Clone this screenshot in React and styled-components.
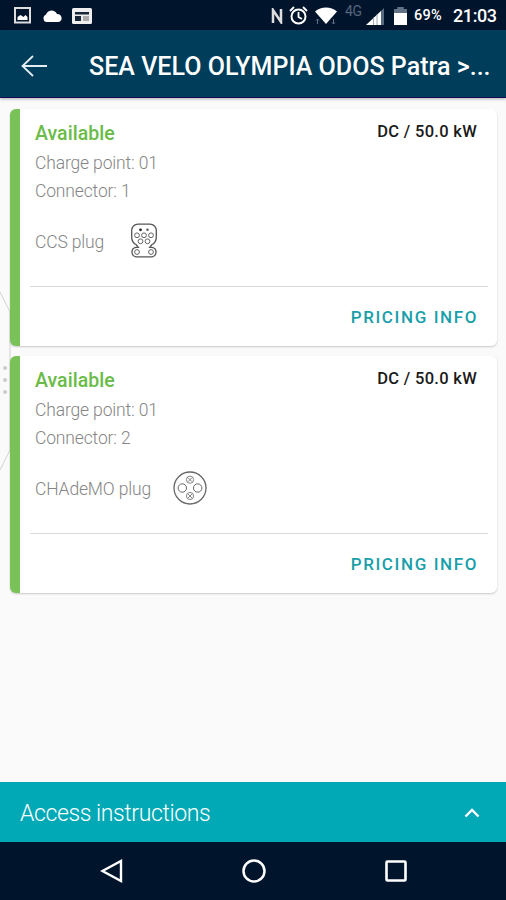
import React from "react";
import styled, { createGlobalStyle } from "styled-components";

const GlobalStyle = createGlobalStyle`
  * {
    box-sizing: border-box;
  }

  body {
    margin: 0;
    font-family: Roboto, "Liberation Sans", sans-serif;
  }
`;

const Screen = styled.div`
  display: flex;
  flex-direction: column;
  width: 506px;
  height: 900px;
  overflow: hidden;
  background: #fafafa;
`;

const StatusBar = styled.div`
  display: flex;
  align-items: center;
  height: 30px;
  flex: none;
  padding: 1px 9px 0 14px;
  background: #00142c;
  color: #fff;
`;

const Icon = styled.svg`
  display: block;
  flex: none;
  fill: none;
  stroke: ${(props) => props.$color || "#fff"};
  margin-left: ${(props) => props.$gap || 0}px;
`;

const Spacer = styled.div`
  flex: 1;
`;

const Network = styled.span`
  align-self: flex-start;
  margin-left: 8px;
  width: 18px;
  font-size: 14px;
  line-height: 20px;
  letter-spacing: -0.4px;
  color: #54657c;
`;

const Battery = styled.span`
  margin-left: 7px;
  width: 32px;
  font-size: 14.5px;
  font-weight: 500;
  letter-spacing: 0.3px;
`;

const Clock = styled.span`
  margin-left: 7px;
  width: 44px;
  font-size: 18px;
  font-weight: 500;
  letter-spacing: -0.4px;
  white-space: nowrap;
`;

const Header = styled.header`
  display: flex;
  align-items: center;
  height: 68px;
  flex: none;
  padding: 4px 14px 0 21px;
  background: #003d5a;
  border-bottom: 1px solid #140c50;
  box-shadow: 0 1px 3px rgba(20, 20, 60, 0.35);
  z-index: 1;
`;

const Title = styled.h1`
  margin: 0 0 0 41px;
  padding-top: 1px;
  font-size: 25px;
  font-weight: 500;
  letter-spacing: 0.02px;
  color: #fff;
  white-space: nowrap;
`;

const Content = styled.main`
  position: relative;
  display: flex;
  flex-direction: column;
  gap: 10px;
  flex: 1;
  padding: 11px 9px 0 10px;
`;

// Edge of the side drawer, lies under the cards
const DrawerHandle = styled.svg`
  position: absolute;
  left: 0;
  top: 190px;
  fill: none;
  stroke: #d2d2d2;
`;

const Card = styled.section`
  position: relative;
  height: 237px;
  padding: 12px 10px 0 20px;
  background: #fff;
  border-left: 10px solid #78c258;
  border-radius: 6px;
  box-shadow: 0 1px 2px rgba(0, 0, 0, 0.2);
`;

const CardTop = styled.div`
  display: flex;
  justify-content: space-between;
  height: 28px;
  margin-left: -5px;
  padding-right: 10px;
`;

const Availability = styled.h2`
  margin: 0;
  font-size: 19.5px;
  font-weight: 500;
  line-height: 26px;
  letter-spacing: 0.05px;
  color: #6abb48;
`;

const Power = styled.span`
  font-size: 16.5px;
  font-weight: 500;
  line-height: 21px;
  letter-spacing: 0.3px;
  color: #1a1a1a;
`;

const Detail = styled.p`
  margin: 0 0 0 -5px;
  font-size: 17.5px;
  font-weight: 300;
  line-height: 28px;
  letter-spacing: -0.15px;
  color: #858585;
`;

const Plug = styled.div`
  display: flex;
  align-items: center;
  gap: ${(props) => props.$gap}px;
  height: 34px;
  margin-top: 19px;

  ${Detail} {
    padding-top: 2px;
  }
`;

const CardFooter = styled.div`
  display: flex;
  justify-content: flex-end;
  margin: 28px -1px 0 -10px;
  padding: 18px 10px 0 0;
  border-top: 1px solid #dadada;
`;

const PricingButton = styled.button`
  padding: 0;
  border: 0;
  background: none;
  font-family: inherit;
  font-size: 17px;
  font-weight: 500;
  line-height: 24px;
  letter-spacing: 1.6px;
  color: #1a9faa;
`;

const Instructions = styled.div`
  display: flex;
  align-items: center;
  justify-content: space-between;
  height: 60px;
  flex: none;
  padding: 2px 26px 0 20px;
  background: #00a9b5;
  font-size: 23px;
  font-weight: 300;
  letter-spacing: -0.4px;
  color: #fff;
`;

const NavBar = styled.nav`
  display: flex;
  align-items: center;
  height: 58px;
  flex: none;
  padding: 0 0 0 100px;
  background: #00142c;
`;

const CcsIcon = () => (
  <Icon width="30" height="36" viewBox="0 0 30 36" $color="#555">
    <path
      d="M9 1.2h12c3.6 0 6.3 2.8 6.3 6.4v6.6c0 4-2 6.2-4.6 7.6l-2 2.6h2.5a4.8 4.8 0 0 1 0 9.4H6.8a4.8 4.8 0 0 1 0-9.4h2.5l-2-2.6c-2.6-1.4-4.6-3.6-4.6-7.6V7.6c0-3.6 2.7-6.4 6.3-6.4z"
      strokeWidth="1.3"
    />
    <g strokeWidth="0.9">
      <circle cx="8" cy="12.3" r="2.4" />
      <circle cx="15" cy="12.3" r="2.4" />
      <circle cx="22" cy="12.3" r="2.4" />
      <circle cx="11.5" cy="18.3" r="2.4" />
      <circle cx="18.5" cy="18.3" r="2.4" />
      <circle cx="8" cy="29" r="2.4" />
      <circle cx="22" cy="29" r="2.4" />
    </g>
    <circle cx="11.5" cy="6.8" r="1.4" fill="#222" stroke="none" />
    <circle cx="18.5" cy="6.8" r="1.2" fill="#555" stroke="none" />
  </Icon>
);

const ChademoIcon = () => (
  <Icon width="34" height="34" viewBox="0 0 34 34" $color="#666">
    <circle cx="17" cy="17" r="16" strokeWidth="1.3" />
    <circle cx="9.3" cy="17" r="4.2" />
    <circle cx="24.7" cy="17" r="4.2" />
    <g strokeWidth="0.8">
      <circle cx="17" cy="8.7" r="3.6" />
      <circle cx="17" cy="25" r="3.6" />
      <path d="M15 6.7l4 4m0-4l-4 4M15 23l4 4m0-4l-4 4" />
    </g>
  </Icon>
);

const connectors = [
  { id: 1, plug: "CCS plug", gap: 25, icon: <CcsIcon /> },
  { id: 2, plug: "CHAdeMO plug", gap: 22, icon: <ChademoIcon /> },
];

const ConnectorCard = ({ connector }) => (
  <Card>
    <CardTop>
      <Availability>Available</Availability>
      <Power>DC / 50.0 kW</Power>
    </CardTop>
    <Detail>Charge point: 01</Detail>
    <Detail>Connector: {connector.id}</Detail>
    <Plug $gap={connector.gap}>
      <Detail>{connector.plug}</Detail>
      {connector.icon}
    </Plug>
    <CardFooter>
      <PricingButton>PRICING INFO</PricingButton>
    </CardFooter>
  </Card>
);

const StatusIcons = () => (
  <StatusBar>
    <Icon width="17" height="17" viewBox="0 0 17 17" $color="#ddd">
      <rect x="1" y="1" width="15" height="14.5" strokeWidth="2" />
      <path d="M3.5 13V10l3-2 3 2 2-2 2 2v3z" fill="#fff" stroke="none" />
    </Icon>
    <Icon width="20" height="12" viewBox="0 0 20 12" $gap={11}>
      <path d="M4 12a4 4 0 0 1 0-7.5C6-.8 13-1 15 4c6 0 6 8 1 8z" fill="#fff" stroke="none" />
    </Icon>
    <Icon width="20" height="16" viewBox="0 0 20 16" $gap={10}>
      <rect width="20" height="16" rx="1.5" fill="#eee" stroke="none" />
      <path d="M3 4h14v2.5H3zM3 8h6v5H3z" fill="#172538" stroke="none" />
      <path d="M11 8h6v5h-6z" fill="#aaa" stroke="none" />
    </Icon>
    <Spacer />
    <Icon width="12" height="16" viewBox="0 0 12 16" $color="#ddd">
      <path d="M2 15V2l8 12V1" strokeWidth="2.5" />
    </Icon>
    <Icon width="19" height="19" viewBox="0 0 19 19" $gap={6}>
      <circle cx="9.5" cy="10.5" r="7" strokeWidth="2" />
      <path d="M1 5l4-4M18 5l-4-4M9.5 6v5l3.5 2" strokeWidth="1.8" />
    </Icon>
    <Icon width="22" height="17" viewBox="0 0 22 17" $gap={7}>
      <path d="M0 4.5C6-1 16-1 22 4.5L11 17z" fill="#fff" stroke="none" />
      <path d="M2.5 17v-5M1 13.5L2.5 12 4 13.5M18.5 12v5M17 15.5l1.5 1.5 1.5-1.5" stroke="#627187" />
    </Icon>
    <Network>4G</Network>
    <Icon width="19" height="18" viewBox="0 0 19 18" $gap={3}>
      <path d="M18 18V1L1 18z" fill="#586a80" stroke="none" />
      <path d="M0 18L15 4v14z" fill="#fff" stroke="none" />
      <path d="M7.5 10v8M11 7v11" stroke="#778396" strokeWidth="0.7" />
    </Icon>
    <Icon width="13" height="18" viewBox="0 0 12 18" preserveAspectRatio="none" $gap={9}>
      <path d="M0 2h3V0h6v2h3v5H0z" fill="#617286" stroke="none" />
      <path d="M0 6h12v12H0z" fill="#fff" stroke="none" />
    </Icon>
    <Battery>69%</Battery>
    <Clock>21:03</Clock>
  </StatusBar>
);

const App = () => (
  <>
    <GlobalStyle />
    <Screen>
      <StatusIcons />
      <Header>
        <Icon width="27" height="22" viewBox="0 0 27 22" $color="#e4edf2">
          <path d="M26 11H1.5M12 1L1.5 11 12 21" strokeWidth="1.8" />
        </Icon>
        <Title>SEA VELO OLYMPIA ODOS Patra &gt;...</Title>
      </Header>
      <Content>
        <DrawerHandle width="12" height="190">
          <path d="M0 4L10 24V162L0 182" />
          <g fill="#ccc" stroke="none">
            <circle cx="5" cy="80" r="2" />
            <circle cx="5" cy="92" r="2" />
            <circle cx="5" cy="104" r="2" />
          </g>
        </DrawerHandle>
        {connectors.map((connector) => (
          <ConnectorCard key={connector.id} connector={connector} />
        ))}
      </Content>
      <Instructions>
        Access instructions
        <Icon width="16" height="10" viewBox="0 0 16 10">
          <path d="M1.5 8.5L8 2l6.5 6.5" strokeWidth="2.4" />
        </Icon>
      </Instructions>
      <NavBar>
        <Icon width="23" height="24" viewBox="0 0 23 24">
          <path d="M21 2v20L2.5 12z" strokeWidth="2.4" />
        </Icon>
        <Icon width="24" height="24" viewBox="0 0 24 24" $gap={119}>
          <circle cx="12" cy="12" r="10.5" strokeWidth="2.5" />
        </Icon>
        <Icon width="22" height="22" viewBox="0 0 22 22" $gap={119}>
          <rect x="1.5" y="1.5" width="19" height="19" rx="1" strokeWidth="2.6" />
        </Icon>
      </NavBar>
    </Screen>
  </>
);

export default App;
